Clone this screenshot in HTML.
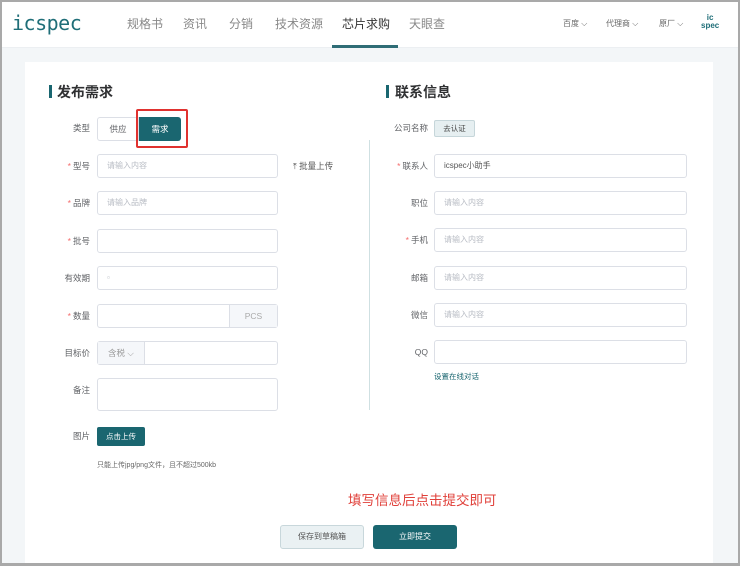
<!DOCTYPE html>
<html><head><meta charset="utf-8"><style>
*{box-sizing:border-box;margin:0;padding:0}
body{width:740px;height:566px;overflow:hidden;background:#f3f6f8;font-family:"Liberation Sans","Noto Sans CJK SC",sans-serif;position:relative;color:#606266}
.frame{position:absolute;left:0;top:0;width:740px;height:566px;border:2px solid #a9a9a9;border-bottom-width:3px;pointer-events:none;z-index:9}
.hdr{position:absolute;left:0;top:0;width:740px;height:48px;background:#fff;border-bottom:1px solid #eceff2}
.a{position:absolute;white-space:nowrap}
.card{position:absolute;left:25px;top:62px;width:688px;height:502px;background:#fff}
.in{position:absolute;height:24px;border:1px solid #dcdfe6;border-radius:3px;background:#fff;font-size:8px;color:#b8bcc4;padding-left:9px;line-height:22px}
.lb{position:absolute;font-size:8.5px;color:#606266;text-align:right;width:60px;line-height:24px}
.lb b{color:#f56c6c;font-weight:normal;margin-right:2px}
.tt{position:absolute;font-size:14px;font-weight:bold;color:#303133}
.bar{position:absolute;width:3px;height:13px;background:#1a6670}
</style></head><body>
<div class="hdr">
<div class="a" style="left:12px;top:11px;font-size:20px;color:#1f6e78;font-family:'DejaVu Sans Mono','Liberation Mono',monospace;letter-spacing:-0.5px">icspec</div>
<div class="a" style="left:127px;top:15px;font-size:12px;color:#888">规格书</div>
<div class="a" style="left:183px;top:15px;font-size:12px;color:#888">资讯</div>
<div class="a" style="left:229px;top:15px;font-size:12px;color:#888">分销</div>
<div class="a" style="left:275px;top:15px;font-size:12px;color:#888">技术资源</div>
<div class="a" style="left:342px;top:15px;font-size:12px;color:#333">芯片求购</div>
<div class="a" style="left:409px;top:15px;font-size:12px;color:#888">天眼查</div>
<div class="a" style="left:332px;top:45px;width:66px;height:3px;background:#2f6d76"></div>
<div class="a" style="left:563px;top:18px;font-size:8px;color:#666">百度 ⌵</div>
<div class="a" style="left:606px;top:18px;font-size:8px;color:#666">代理商 ⌵</div>
<div class="a" style="left:659px;top:18px;font-size:8px;color:#666">原厂 ⌵</div>
<div class="a" style="left:701px;top:14px;font-size:8px;line-height:8px;color:#1f6e78;text-align:center;font-weight:bold">ic<br>spec</div>
</div>
<div class="card"></div>
<div class="bar" style="left:49px;top:85px"></div><div class="tt" style="left:57px;top:82px">发布需求</div>
<div class="bar" style="left:386px;top:85px"></div><div class="tt" style="left:395px;top:82px">联系信息</div>
<div class="lb" style="left:30px;top:116px">类型</div>
<div class="a" style="left:97px;top:117px;width:42px;height:24px;border:1px solid #dcdfe6;border-radius:3px 0 0 3px;font-size:8.5px;line-height:22px;text-align:center">供应</div>
<div class="a" style="left:139px;top:117px;width:42px;height:24px;background:#1a6670;border-radius:0 3px 3px 0;font-size:8.5px;line-height:24px;text-align:center;color:#fff">需求</div>
<div class="a" style="left:136px;top:109px;width:52px;height:39px;border:2px solid #e0322f;border-radius:2px"></div>
<div class="lb" style="left:30px;top:154px"><b>*</b>型号</div><div class="in" style="left:97px;top:154px;width:181px">请输入内容</div>
<div class="a" style="left:293px;top:160px;font-size:8.5px;color:#555">⤒ 批量上传</div>
<div class="lb" style="left:30px;top:191px"><b>*</b>品牌</div><div class="in" style="left:97px;top:191px;width:181px">请输入品牌</div>
<div class="lb" style="left:30px;top:229px"><b>*</b>批号</div><div class="in" style="left:97px;top:229px;width:181px"></div>
<div class="lb" style="left:30px;top:266px">有效期</div><div class="in" style="left:97px;top:266px;width:181px">▫</div>
<div class="lb" style="left:30px;top:304px"><b>*</b>数量</div><div class="in" style="left:97px;top:304px;width:181px"></div>
<div class="a" style="left:229px;top:305px;width:48px;height:22px;background:#f5f7fa;border-left:1px solid #dcdfe6;font-size:8.5px;color:#aaa;text-align:center;line-height:22px">PCS</div>
<div class="lb" style="left:30px;top:341px">目标价</div><div class="in" style="left:97px;top:341px;width:181px"></div>
<div class="a" style="left:98px;top:342px;width:47px;height:22px;background:#f5f7fa;border-right:1px solid #dcdfe6;font-size:8.5px;color:#999;line-height:22px;padding-left:10px">含税 ⌵</div>
<div class="lb" style="left:30px;top:378px">备注</div><div class="in" style="left:97px;top:378px;width:181px;height:33px"></div>
<div class="lb" style="left:30px;top:424px">图片</div>
<div class="a" style="left:97px;top:427px;width:48px;height:19px;background:#1a6670;border-radius:2px;font-size:7.5px;color:#fff;text-align:center;line-height:19px">点击上传</div>
<div class="a" style="left:97px;top:460px;font-size:7px;color:#666">只能上传jpg/png文件，且不超过500kb</div>
<div class="a" style="left:369px;top:140px;width:1px;height:270px;background:#cfe0e2"></div>
<div class="lb" style="left:368px;top:116px">公司名称</div>
<div class="a" style="left:434px;top:120px;width:41px;height:17px;background:#e6eff1;border:1px solid #c6d6da;border-radius:2px;font-size:7.5px;color:#444;text-align:center;line-height:15px">去认证</div>
<div class="lb" style="left:368px;top:154px"><b>*</b>联系人</div><div class="in" style="left:434px;top:154px;width:253px;color:#555">icspec小助手</div>
<div class="lb" style="left:368px;top:191px">职位</div><div class="in" style="left:434px;top:191px;width:253px">请输入内容</div>
<div class="lb" style="left:368px;top:228px"><b>*</b>手机</div><div class="in" style="left:434px;top:228px;width:253px">请输入内容</div>
<div class="lb" style="left:368px;top:266px">邮箱</div><div class="in" style="left:434px;top:266px;width:253px">请输入内容</div>
<div class="lb" style="left:368px;top:303px">微信</div><div class="in" style="left:434px;top:303px;width:253px">请输入内容</div>
<div class="lb" style="left:368px;top:340px">QQ</div><div class="in" style="left:434px;top:340px;width:253px"></div>
<div class="a" style="left:434px;top:371px;font-size:7.5px;color:#1a6670">设置在线对话</div>
<div class="a" style="left:348px;top:489px;font-size:13.5px;color:#e0403a">填写信息后点击提交即可</div>
<div class="a" style="left:280px;top:525px;width:84px;height:24px;background:#eaf1f3;border:1px solid #c8d7db;border-radius:3px;font-size:8px;color:#555;text-align:center;line-height:22px">保存到草稿箱</div>
<div class="a" style="left:373px;top:525px;width:84px;height:24px;background:#1a6670;border-radius:3px;font-size:8px;color:#fff;text-align:center;line-height:24px">立即提交</div>
<div class="frame"></div>
</body></html>
